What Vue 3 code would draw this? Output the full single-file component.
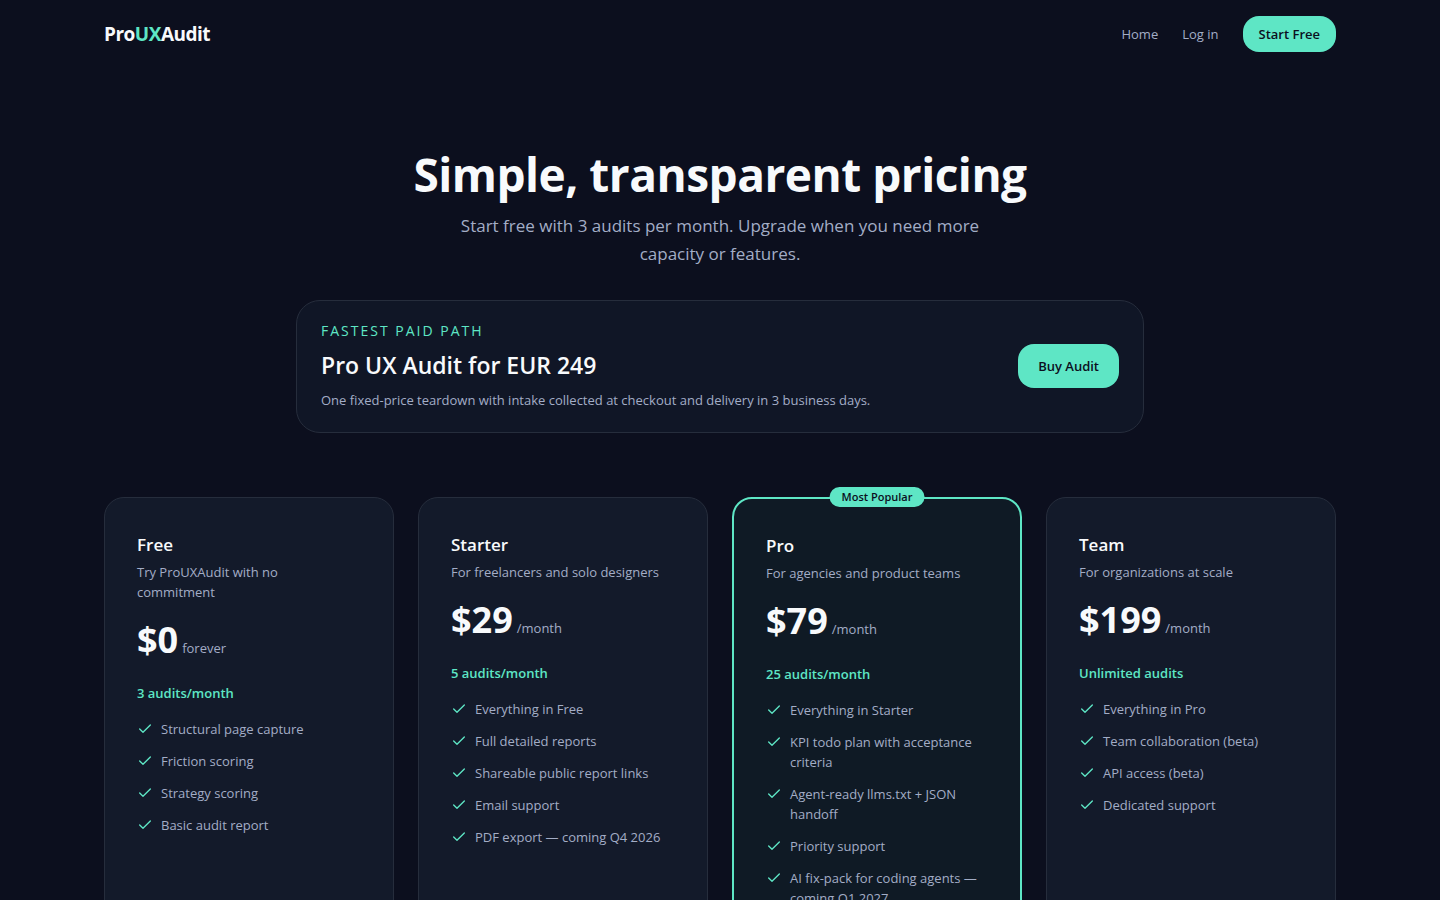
<script setup>
const plans = [
  { name: 'Free', text: 'Try ProUXAudit with no commitment', price: '$0', period: 'forever', quota: '3 audits/month', features: ['Structural page capture', 'Friction scoring', 'Strategy scoring', 'Basic audit report'] },
  { name: 'Starter', text: 'For freelancers and solo designers', price: '$29', period: '/month', quota: '5 audits/month', features: ['Everything in Free', 'Full detailed reports', 'Shareable public report links', 'Email support', 'PDF export — coming Q4 2026'] },
  { name: 'Pro', popular: true, text: 'For agencies and product teams', price: '$79', period: '/month', quota: '25 audits/month', features: ['Everything in Starter', 'KPI todo plan with acceptance criteria', 'Agent-ready llms.txt + JSON handoff', 'Priority support', 'AI fix-pack for coding agents — coming Q1 2027'] },
  { name: 'Team', text: 'For organizations at scale', price: '$199', period: '/month', quota: 'Unlimited audits', features: ['Everything in Pro', 'Team collaboration (beta)', 'API access (beta)', 'Dedicated support'] },
]
</script>

<template>
  <div class="page">
    <header class="wrap header">
      <a class="logo" href="#">Pro<span>UX</span>Audit</a>
      <nav>
        <a href="#">Home</a>
        <a href="#">Log in</a>
        <a class="btn" href="#">Start Free</a>
      </nav>
    </header>
    <main class="wrap">
      <section class="hero">
        <h1>Simple, transparent pricing</h1>
        <p>Start free with 3 audits per month. Upgrade when you need more capacity or features.</p>
      </section>
      <section class="banner">
        <div>
          <p class="eyebrow">Fastest paid path</p>
          <h2>Pro UX Audit for EUR 249</h2>
          <p class="note">One fixed-price teardown with intake collected at checkout and delivery in 3 business days.</p>
        </div>
        <button class="btn buy" type="button">Buy Audit</button>
      </section>
      <section class="plans">
        <article v-for="p in plans" :key="p.name" class="card" :class="{ popular: p.popular }">
          <span v-if="p.popular" class="badge">Most Popular</span>
          <h3>{{ p.name }}</h3>
          <p class="desc">{{ p.text }}</p>
          <p class="price"><strong>{{ p.price }}</strong><span>{{ p.period }}</span></p>
          <p class="quota">{{ p.quota }}</p>
          <ul>
            <li v-for="f in p.features" :key="f">
              <svg viewBox="0 0 24 24" aria-hidden="true"><path d="M20 6 9 17l-5-5" /></svg>
              <span>{{ f }}</span>
            </li>
          </ul>
        </article>
      </section>
    </main>
  </div>
</template>

<style>
html { background: #0c0f1e; scrollbar-width: none; }
body { margin: 0; }
</style>

<style scoped>
.page { padding-bottom: 80px; background: #0c0f1e; color: #f8fafc; font: 13px/20px "Segoe UI", "Open Sans", "Noto Sans", sans-serif; }
.page * { box-sizing: border-box; }
h1, h2, h3, p, ul { margin: 0; padding: 0; }
a { color: inherit; text-decoration: none; }
.wrap { max-width: 1280px; margin: 0 auto; padding: 0 24px; }
.header { display: flex; align-items: center; justify-content: space-between; padding-top: 16px; padding-bottom: 16px; }
.logo { font-size: 19px; line-height: 28px; font-weight: 700; letter-spacing: -0.5px; }
.logo span, .eyebrow, .quota { color: #5ee6c5; }
nav { display: flex; align-items: center; gap: 24px; color: #a3adc6; }
.btn { display: inline-flex; align-items: center; justify-content: center; height: 36px; padding: 0 16px; border: 0; border-radius: 16px; background: #5ee6c5; color: #0c0f1e; font: inherit; font-weight: 600; white-space: nowrap; }
.hero { padding-top: 82px; text-align: center; }
h1 { margin-bottom: 14px; font-size: 46px; line-height: 48px; font-weight: 700; letter-spacing: -0.5px; }
.hero p { max-width: 576px; margin: 0 auto; font-size: 17px; line-height: 28px; color: #a3adc6; }
.banner { display: flex; align-items: center; justify-content: space-between; gap: 24px; max-width: 848px; margin: 32px auto 64px; padding: 20px 24px 22px; border: 1px solid #262d3c; border-radius: 24px; background: #101626; }
.eyebrow { font-size: 14px; text-transform: uppercase; letter-spacing: 2px; }
h2 { margin: 8px 0; font-size: 23px; line-height: 33px; font-weight: 600; }
.note, .desc, .price span, li { color: #a3adc6; }
.buy { height: 44px; padding: 0 20px; }
.plans { display: grid; grid-template-columns: repeat(4, 1fr); gap: 24px; }
.card { position: relative; padding: 32px; border: 1px solid #262d3c; border-radius: 20px; background: #131a2a; }
.popular { border: 2px solid #5ee6c5; background: #0f1a25; }
.badge { position: absolute; top: -12px; left: 50%; transform: translateX(-50%); padding: 2px 12px; border-radius: 10px; background: #5ee6c5; color: #0c0f1e; font-size: 11px; line-height: 16px; font-weight: 600; white-space: nowrap; }
h3 { font-size: 17px; line-height: 30px; font-weight: 600; }
.desc { margin-top: 2px; padding-right: 8px; }
.price { display: flex; align-items: baseline; gap: 4px; margin-top: 18px; }
.price strong { font-size: 36px; line-height: 40px; font-weight: 700; }
.quota { margin-top: 23px; font-weight: 600; }
ul { display: grid; gap: 12px; margin-top: 16px; list-style: none; }
li { display: flex; align-items: flex-start; gap: 8px; }
svg { flex: none; width: 16px; height: 16px; margin-top: 2px; fill: none; stroke: #5ee6c5; stroke-width: 2; stroke-linecap: round; stroke-linejoin: round; }
</style>
